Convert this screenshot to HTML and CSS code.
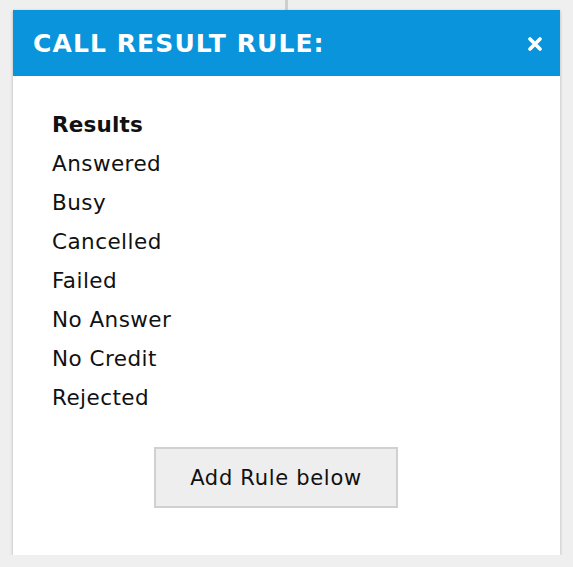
FILE: index.html
```html
<!DOCTYPE html>
<html>
<head>
<meta charset="utf-8">
<link rel="stylesheet" href="styles.css">
</head>
<body>
<div class="connector"></div>
<div class="dialog">
  <div class="dialog-header">
    <span class="dialog-title">CALL RESULT RULE:</span>
    <svg class="dialog-close" width="14" height="14" viewBox="0 0 14 14" aria-label="close">
      <path d="M2 2 L12 12 M12 2 L2 12" stroke="#fff" stroke-width="3.6" stroke-linecap="round" fill="none"/>
    </svg>
  </div>
  <div class="dialog-body">
    <ul class="results">
      <li class="results-head">Results</li>
      <li>Answered</li>
      <li>Busy</li>
      <li>Cancelled</li>
      <li>Failed</li>
      <li>No Answer</li>
      <li>No Credit</li>
      <li>Rejected</li>
    </ul>
    <div class="actions">
      <button class="btn">Add Rule below</button>
    </div>
  </div>
</div>
</body>
</html>
```

FILE: styles.css
```css
html, body {
  margin: 0;
  padding: 0;
  background: #efefef;
  font-family: "DejaVu Sans", "Noto Sans", sans-serif;
}
.connector {
  margin-left: 285px;
  width: 3px;
  height: 10px;
  background: #cfcfcf;
}
.dialog {
  margin-left: 13px;
  width: 547px;
  background: #fff;
  box-shadow: 0 1px 3px rgba(0,0,0,0.25);
}
.dialog-header {
  height: 66px;
  background: #0994dc;
  display: flex;
  align-items: center;
  justify-content: space-between;
  padding: 0 18px 0 20px;
  color: #fff;
}
.dialog-title {
  font-size: 25px;
  font-weight: bold;
  letter-spacing: 1.1px;
  padding-top: 1px;
}
.dialog-close {
  display: block;
  margin-top: 2px;
}
.dialog-body {
  padding: 29px 39px 47px;
}
.results {
  list-style: none;
  margin: 0;
  padding: 0;
}
.results li {
  font-size: 21.5px;
  line-height: 39px;
  letter-spacing: 0.45px;
  color: #111;
}
.results .results-head {
  font-weight: bold;
  letter-spacing: 0.2px;
}
.actions {
  display: flex;
  justify-content: center;
  margin-top: 30px;
  padding-right: 21px;
}
.btn {
  width: 244px;
  height: 61px;
  background: #eeeeee;
  border: 2px solid #d0d0d0;
  font-family: "DejaVu Sans", sans-serif;
  font-size: 21px;
  letter-spacing: 0.7px;
  color: #111;
  padding: 0;
}
```
